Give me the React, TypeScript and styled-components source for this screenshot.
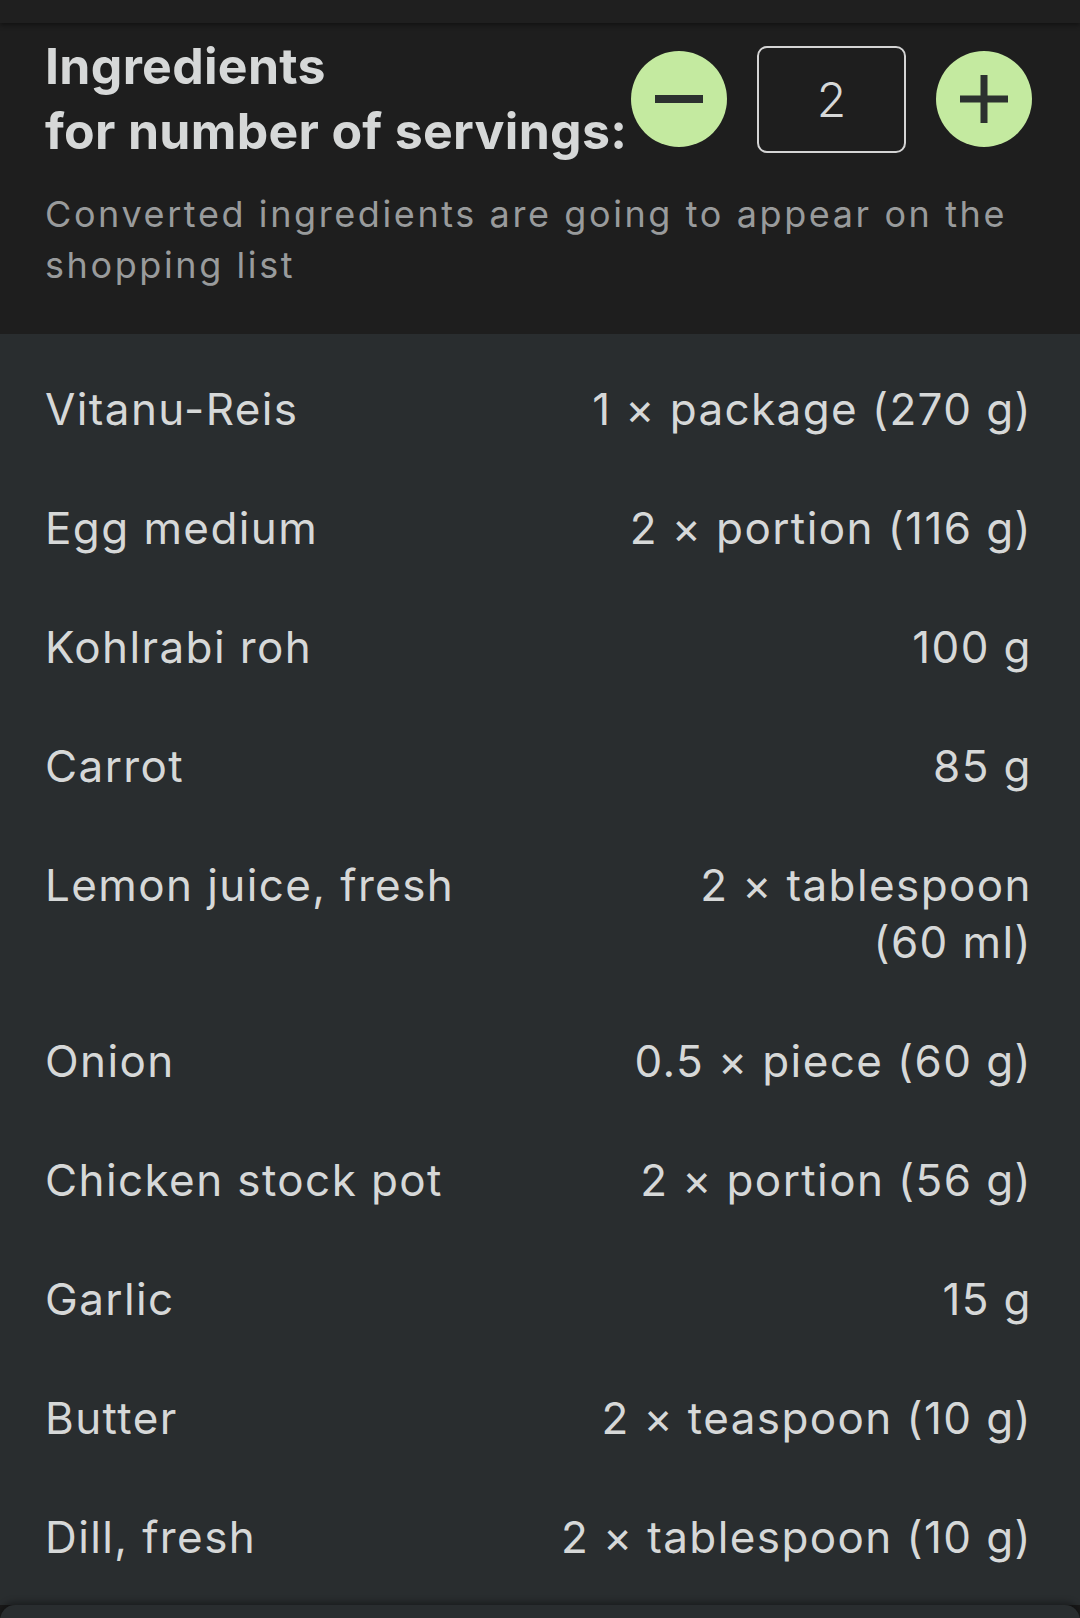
import React, { useState } from 'react';
import styled, { createGlobalStyle } from 'styled-components';

interface Ingredient {
  name: string;
  amount: string;
}

// non-breaking spaces keep "(60 ml)" together when the amount wraps
const ingredients: Ingredient[] = [
  { name: 'Vitanu-Reis', amount: '1 × package (270\u00a0g)' },
  { name: 'Egg medium', amount: '2 × portion (116\u00a0g)' },
  { name: 'Kohlrabi roh', amount: '100 g' },
  { name: 'Carrot', amount: '85 g' },
  { name: 'Lemon juice, fresh', amount: '2 × tablespoon (60\u00a0ml)' },
  { name: 'Onion', amount: '0.5 × piece (60\u00a0g)' },
  { name: 'Chicken stock pot', amount: '2 × portion (56\u00a0g)' },
  { name: 'Garlic', amount: '15 g' },
  { name: 'Butter', amount: '2 × teaspoon (10\u00a0g)' },
  { name: 'Dill, fresh', amount: '2 × tablespoon (10\u00a0g)' },
];

const GlobalStyle = createGlobalStyle`
  html, body {
    margin: 0;
    padding: 0;
    background-color: #1a1a1a;
    font-family: Inter, 'Noto Sans', sans-serif;
    color: #d6d8d8;
    overflow: hidden;
  }
`;

const Page = styled.div`
  width: 1080px;
  height: 1618px;
  display: flex;
  flex-direction: column;
  overflow: hidden;
`;

const TopBar = styled.div`
  height: 23px;
  flex-shrink: 0;
  background-color: #1f1f1f;
  box-shadow: 0 2px 5px rgba(0, 0, 0, 0.45);
  position: relative;
  z-index: 1;
`;

const Header = styled.section`
  background-color: #1e1e1e;
  padding: 11px 48px 43px 45px;
  flex-shrink: 0;
`;

const TitleRow = styled.div`
  display: flex;
  align-items: center;
  justify-content: space-between;
`;

const Title = styled.h1`
  margin: 0;
  font-size: 50px;
  line-height: 65px;
  font-weight: 700;
  letter-spacing: 0.3px;
  color: #d6d8d8;
`;

const Stepper = styled.div`
  display: flex;
  align-items: center;
  gap: 30px;
`;

const RoundButton = styled.button`
  width: 96px;
  height: 96px;
  border-radius: 50%;
  border: none;
  padding: 0;
  background-color: #c4eaa0;
  display: flex;
  align-items: center;
  justify-content: center;
  cursor: pointer;
`;

const CountBox = styled.div`
  width: 149px;
  height: 107px;
  box-sizing: border-box;
  border: 2.5px solid #d4d4d4;
  border-radius: 10px;
  display: flex;
  align-items: center;
  justify-content: center;
  font-size: 48px;
  font-weight: 300;
  color: #d6d8d8;
`;

const Subtitle = styled.p`
  margin: 25px 0 0;
  font-size: 36px;
  line-height: 51px;
  font-weight: 400;
  letter-spacing: 2.6px;
  color: #999b9c;
`;

const List = styled.ul`
  list-style: none;
  margin: 0;
  padding: 16px 48px 8px 45px;
  background-color: #292d2f;
  flex: 1;
`;

const Row = styled.li`
  display: grid;
  grid-template-columns: 1fr 1fr;
  padding: 31px 0;
  font-size: 44px;
  line-height: 57px;
  font-weight: 400;
  letter-spacing: 1.4px;
  color: #d6d8d8;
`;

const Amount = styled.span`
  text-align: right;
`;

const SheetWrap = styled.div`
  background-color: #1a1a1a;
  flex-shrink: 0;
`;

const Sheet = styled.div`
  height: 15px;
  background-color: #292d2f;
  border-radius: 26px 26px 0 0;
  box-shadow: 0 -3px 6px rgba(0, 0, 0, 0.35);
`;

function MinusIcon() {
  return (
    <svg width="50" height="50" viewBox="0 0 50 50">
      <line x1="1" y1="25" x2="49" y2="25" stroke="#2c312f" strokeWidth="8" />
    </svg>
  );
}

function PlusIcon() {
  return (
    <svg width="50" height="50" viewBox="0 0 50 50">
      <line x1="1" y1="25" x2="49" y2="25" stroke="#2c312f" strokeWidth="7" />
      <line x1="25" y1="1" x2="25" y2="49" stroke="#2c312f" strokeWidth="7" />
    </svg>
  );
}

function App() {
  const [servings, setServings] = useState(2);

  return (
    <>
      <GlobalStyle />
      <Page>
        <TopBar />
        <Header>
          <TitleRow>
            <Title>
              Ingredients
              <br />
              for number of servings:
            </Title>
            <Stepper>
              <RoundButton aria-label="decrease" onClick={() => setServings((s) => Math.max(1, s - 1))}>
                <MinusIcon />
              </RoundButton>
              <CountBox>{servings}</CountBox>
              <RoundButton aria-label="increase" onClick={() => setServings((s) => s + 1)}>
                <PlusIcon />
              </RoundButton>
            </Stepper>
          </TitleRow>
          <Subtitle>Converted ingredients are going to appear on the shopping list</Subtitle>
        </Header>
        <List>
          {ingredients.map((item) => (
            <Row key={item.name}>
              <span>{item.name}</span>
              <Amount>{item.amount}</Amount>
            </Row>
          ))}
        </List>
        <SheetWrap>
          <Sheet />
        </SheetWrap>
      </Page>
    </>
  );
}

export default App;
